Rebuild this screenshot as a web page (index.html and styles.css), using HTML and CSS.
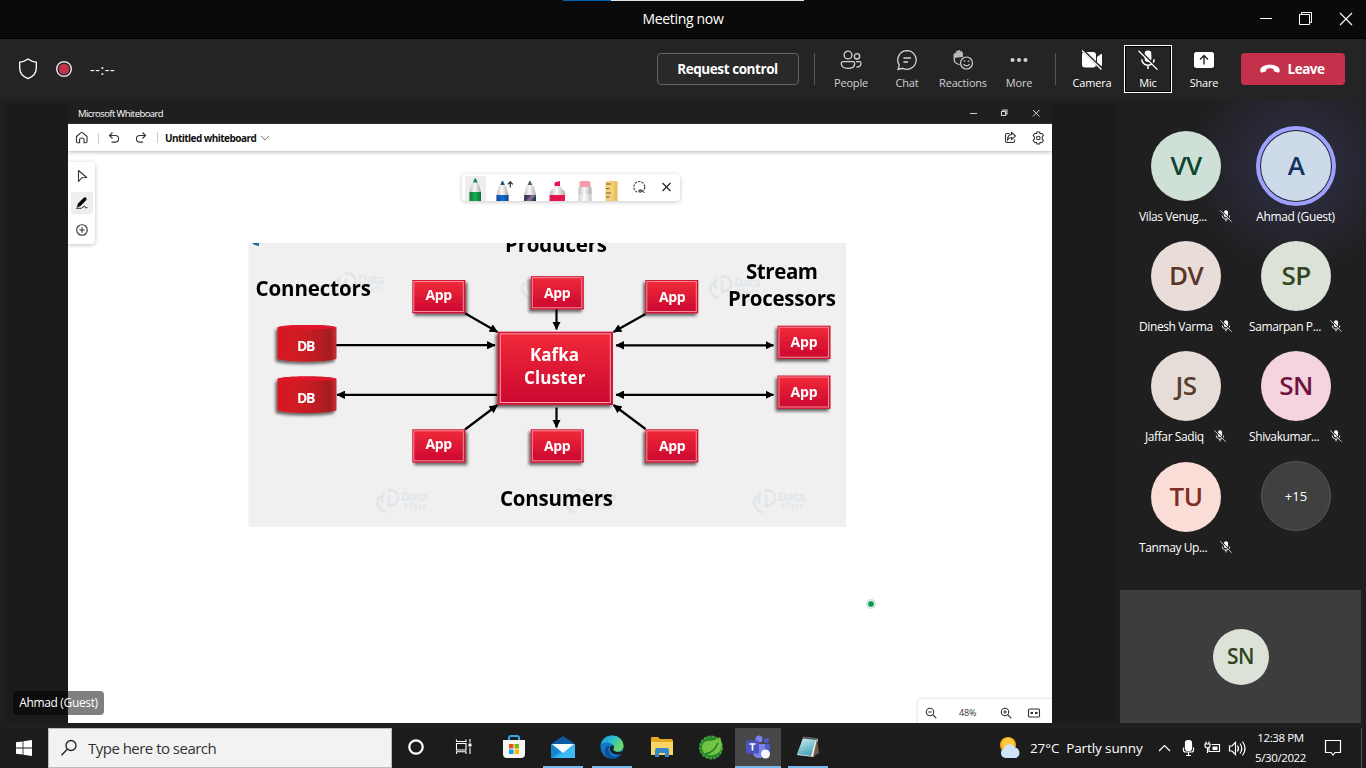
FILE: index.html
```html
<!DOCTYPE html>
<html lang="en">
<head>
<meta charset="utf-8">
<title>Meeting now</title>
<link rel="stylesheet" href="styles.css">
</head>
<body>
<svg width="0" height="0" class="defs">
  <defs>
    <symbol id="mic-off" viewBox="0 0 20 20">
      <rect x="6.6" y="0.5" width="6.8" height="11.5" rx="3.4" fill="currentColor"/>
      <path d="M3.8 9.2c0 3.5 2.7 6 6.2 6s6.2-2.5 6.2-6M10 15.2V19" fill="none" stroke="currentColor" stroke-width="1.5"/>
      <path d="M1.4 0.2L20.4 19" stroke="#222" stroke-width="1.8"/>
      <path d="M0.5 0.8L19.5 19.6" stroke="currentColor" stroke-width="1.3"/>
    </symbol>
  </defs>
</svg>
<div class="window">
  <header class="titlebar">
    <div class="strip"></div>
    <div class="title">Meeting now</div>
    <div class="controls">
      <svg width="100" height="20" viewBox="0 0 100 20" fill="none" stroke="#fff">
        <path d="M10 9.500h12"/>
        <path d="M49.500 5.500h10v10h-10z"/><path d="M51.500 5.500V3.500H61.500V13.500H59.500"/>
        <path d="M90 4l12 12M102 4L90 16" stroke-width="1.100"/>
      </svg>
    </div>
  </header>

  <div class="toolbar">
    <div class="status">
      <svg width="20" height="22" viewBox="0 0 20 22" fill="none" stroke="#fff" stroke-width="1.300"><path d="M10 1.100C12.500 3 15 3.900 18.300 4.100V10C18.300 15 15.500 18.500 10 20.700C4.500 18.500 1.700 15 1.700 10V4.100C5 3.900 7.500 3 10 1.100z"/></svg>
      <svg width="18" height="18" viewBox="0 0 18 18"><circle cx="9" cy="9" r="7.300" fill="none" stroke="#e0dede" stroke-width="1.500"/><circle cx="9" cy="9" r="5.300" fill="#c4314b"/></svg>
      <span class="timer">--:--</span>
    </div>
    <div class="actions">
      <button class="request">Request control</button>
      <i class="sep"></i>
      <div class="act dim"><svg width="22" height="22" viewBox="0 0 22 22" fill="none" stroke="currentColor" stroke-width="1.300"><circle cx="8" cy="6" r="3.900"/><circle cx="17" cy="7.300" r="2.700"/><path d="M3 12.700h10a1.700 1.700 0 0 1 1.700 1.700c0 3-2.500 4.900-6.700 4.900s-6.700-1.900-6.700-4.900A1.700 1.700 0 0 1 3 12.700zM16 12.700h3.500a1.500 1.500 0 0 1 1.500 1.500c0 2.700-2 3.900-4.700 3.900"/></svg><span>People</span></div>
      <div class="act dim"><svg width="22" height="22" viewBox="0 0 22 22" fill="none" stroke="currentColor" stroke-width="1.300"><path d="M11 1.700a9.300 9.300 0 1 1-4.300 17.600L2 20.500l1.300-4.400A9.300 9.300 0 0 1 11 1.700zM7.500 9h7.500M7.500 13h4.500"/></svg><span>Chat</span></div>
      <div class="act dim"><svg width="22" height="22" viewBox="0 0 22 22" fill="none" stroke="currentColor" stroke-width="1.200"><path d="M2.500 9V4.500q0-1.100.9-1.100t.9 1.100V2.800q0-1.200 1-1.200t1 1.200V2.200Q6.300 1 7.300 1t1 1.200v1q0-1.100.9-1.100t.9 1.100V8z" fill="#b8b8b8" stroke="none"/><path d="M2.200 5V10.500c0 3.200 3 4.800 5.500 5M10.200 3.500V8"/><circle cx="14.500" cy="14" r="6" fill="#242424"/><path d="M11.500 15.200q3 3.500 6 0"/><path d="M12.500 11.500v1.300M16.500 11.500v1.300" stroke-width="1.500"/></svg><span>Reactions</span></div>
      <div class="act dim"><svg width="22" height="22" viewBox="0 0 22 22" fill="currentColor"><circle cx="4.500" cy="11" r="2"/><circle cx="11" cy="11" r="2"/><circle cx="17.500" cy="11" r="2"/></svg><span>More</span></div>
      <i class="sep second"></i>
      <div class="act"><svg width="22" height="22" viewBox="0 0 22 22"><rect x="1" y="3" width="14" height="15.500" rx="3" fill="#fff"/><path d="M16 8l4-3q1-.5 1 .5v11q0 1-1 .5l-4-3z" fill="#fff"/><path d="M1.500 1L21 20" stroke="#242424" stroke-width="2.600"/><path d="M1 1.500L20.500 20.500" stroke="#fff" stroke-width="1.300"/></svg><span>Camera</span></div>
      <div class="act focused"><svg width="22" height="22"><use href="#mic-off" x="1" y="1" width="20" height="20"/></svg><span>Mic</span></div>
      <div class="act"><svg width="22" height="22" viewBox="0 0 22 22"><rect x="1" y="3" width="20" height="16" rx="2.500" fill="#fff"/><path d="M11 15.500V7M7 10.500l4-4 4 4" fill="none" stroke="#222" stroke-width="1.400"/></svg><span>Share</span></div>
      <button class="leave"><svg width="20" height="10" viewBox="0 0 20 10"><path d="M10 .8c4.500 0 9.500 1.700 9.700 5.200.1 1.800-.5 2.800-1.700 2.500l-3-.7c-1.500-.4-1.200-1.500-1.700-3-1.800-.8-4.800-.8-6.600 0-.5 1.500-.2 2.600-1.700 3l-3 .7C.8 8.800.2 7.800.3 6 .5 2.500 5.500.8 10 .8z" fill="#fff"/></svg>Leave</button>
    </div>
  </div>

  <main class="stage">
    <section class="shared">
      <div class="wb-title"><span>Microsoft Whiteboard</span>
        <svg width="76" height="12" viewBox="0 0 76 12" fill="none" stroke="#d4d4d4"><path d="M2 6.500h7"/><path d="M33.500 4.500h4v4h-4zM35 4.500V3h4v4h-1.500" stroke-width="1.100"/><path d="M65 3l6.500 6.500M71.500 3L65 9.500"/></svg>
      </div>
      <div class="wb-bar">
        <svg width="78" height="20" viewBox="0 0 78 20" fill="none" stroke="#333" stroke-width="1.100"><path d="M2.500 8.500L7 4.600q.8-.6 1.500 0l4.500 3.900v5.300q0 .9-.9.900H10v-3.500q0-1.200-2.200-1.200t-2.200 1.200v3.500H3.400q-.9 0-.9-.9z" /><path d="M24.500 5v11" stroke="#ccc"/><path d="M36 7.500h5.300a3.300 3.300 0 0 1 0 6.600H37.500M38.500 4.500l-3 3 3 3"/><path d="M71.500 7.500h-5.800a3.300 3.300 0 0 0 0 6.600H69M68.500 4.500l3 3-3 3"/></svg>
        <i></i><b>Untitled whiteboard</b>
        <svg width="10" height="6" viewBox="0 0 10 6" fill="none" stroke="#777"><path d="M1 1l4 4 4-4"/></svg>
        <svg class="wb-right" width="42" height="16" viewBox="0 0 42 16" fill="none" stroke="#333" stroke-width="1.100"><path d="M6.500 3.500H4Q2.500 3.500 2.500 5v6Q2.500 12.500 4 12.500h6q1.500 0 1.500-1.500V9.500M8.500 2.500l4 3.500-4 3.500V7.500Q6 7.500 4.500 10 4.500 5 8.500 4.500z"/><circle cx="35.300" cy="8" r="1.800"/><path d="M34 2h2.600l.5 1.700 1.700-.4 1.600 2.200L39.200 7v2l1.200 1.500-1.600 2.200-1.700-.4-.5 1.700H34l-.5-1.700-1.700.4-1.600-2.200L31.400 9V7l-1.200-1.500 1.600-2.200 1.700.4z"/></svg>
      </div>
      <div class="canvas">
        <div class="side-tools">
          <div><svg width="16" height="16" viewBox="0 0 16 16" fill="none" stroke="#333" stroke-width="1.100"><path d="M4.500 2.500v11L8 9.700l4.700-.2z" stroke-linejoin="round"/></svg></div>
          <div class="on"><svg width="16" height="16" viewBox="0 0 16 16"><path d="M9.700 2.700q1.700-1 2.600.2.900 1.400-.4 2.600L6.500 11l-3.800 1.700L4 8.500z" fill="#000"/><path d="M2 13.300h5.500l2.500-2q1.500-.5 1 1 .5 1.300 2.500.2" fill="none" stroke="#333"/></svg></div>
          <div><svg width="16" height="16" viewBox="0 0 16 16" fill="none" stroke="#333" stroke-width="1.100"><circle cx="8" cy="8" r="5.300"/><path d="M8 5.300v5.400M5.300 8h5.400"/></svg></div>
        </div>

        <div class="pens">
          <svg width="218" height="27" viewBox="462 174 218 27">
            <defs>
              <linearGradient id="body"><stop offset="0" stop-color="#bdbdbd"/><stop offset=".45" stop-color="#fafafa"/><stop offset="1" stop-color="#aaa"/></linearGradient>
              <linearGradient id="green"><stop offset="0" stop-color="#087a36"/><stop offset=".5" stop-color="#19ac57"/><stop offset="1" stop-color="#08733a"/></linearGradient>
              <linearGradient id="blue"><stop offset="0" stop-color="#0b4ba4"/><stop offset=".5" stop-color="#166fd5"/><stop offset="1" stop-color="#0b4494"/></linearGradient>
              <linearGradient id="galaxy" x2="1" y2=".4"><stop offset="0" stop-color="#285f78"/><stop offset=".35" stop-color="#39324d"/><stop offset=".65" stop-color="#92759c"/><stop offset="1" stop-color="#243c58"/></linearGradient>
            </defs>
            <rect x="465" y="176" width="21" height="25" fill="#eee"/>
            <path d="M469.500 201V192Q471 185 473.500 180h3.400Q479.500 185 481 192v9z" fill="url(#body)"/><path d="M469.500 192h11.500v9h-11.500z" fill="url(#green)"/><path d="M473 182.500l1.500-4h1.500l1.500 4z" fill="#16874a"/>
            <path d="M496.500 201v-6q1.500-7 4-12.500h3.800q3 5.500 4.200 12.500v6z" fill="url(#body)"/><path d="M496.500 195h12v6h-12z" fill="url(#blue)"/><path d="M500.300 185l1.500-4h1.300l1.500 4z" fill="#24547f"/>
            <path d="M510.300 187.500V182m-2.500 2.300l2.500-2.500 2.500 2.500" fill="none" stroke="#222" stroke-width="1.100"/>
            <path d="M524 201v-6q1.500-7 4-12.500h3.800q3 5.500 4.200 12.500v6z" fill="url(#body)"/><path d="M524 195h12v6h-12z" fill="url(#galaxy)"/><path d="M527.800 185l1.500-4h1.200l1.500 4z" fill="#40606a"/>
            <path d="M549.500 195q0-4.500 4-6.500l1-2.500h6l1 2.500q4 2 4 6.500z" fill="url(#body)"/><path d="M554.500 186v-3.500l5.500-1.500v5zM549.500 195h15.500v6h-15.500z" fill="#e3164f"/>
            <path d="M578.500 201v-14h13v14z" fill="url(#body)"/><path d="M578.500 194h13v7h-13z" fill="#fff" opacity=".35"/><path d="M579.500 187v-4q0-2 2-2h7q2 0 2 2v4z" fill="#f79baa"/>
            <path d="M605.500 181.500q6-1.500 12 0V201h-12z" fill="#f2d078"/><path d="M614 181v20h3.500v-19.500z" fill="#e8c167"/><path d="M606 184h5M606 188.500h3.500M606 193h5M606 197h3.500" stroke="#725f2c" fill="none"/>
            <circle cx="639.300" cy="187" r="5.500" fill="none" stroke="#333" stroke-width="1.100" stroke-dasharray="2.300 1.150"/><path d="M637.500 189h7v4.500h-7z" fill="#fff"/><circle cx="640" cy="191" r="1.200" fill="none" stroke="#222"/><path d="M641 192.500l3-3M641 189.500l3.500 3.500" stroke="#222"/>
            <path d="M662.500 183l8 8M670.500 183l-8 8" stroke="#222" stroke-width="1.200"/>
          </svg>
        </div>

        <svg class="diagram" width="598" height="284" viewBox="248 243 598 284">
          <defs>
            <linearGradient id="red" x2="0" y2="1"><stop offset="0" stop-color="#f02a38"/><stop offset="1" stop-color="#cb0831"/></linearGradient>
            <linearGradient id="dbred"><stop offset="0" stop-color="#d91923"/><stop offset=".5" stop-color="#c91b22"/><stop offset=".9" stop-color="#a51d1f"/><stop offset="1" stop-color="#d0303a"/></linearGradient>
            <filter id="sh" x="-20%" y="-20%" width="140%" height="150%"><feDropShadow dx="-2" dy="2.500" stdDeviation="1.500" flood-opacity=".6"/></filter>
            <filter id="shr" x="-20%" y="-20%" width="140%" height="150%"><feDropShadow dx="2" dy="2.500" stdDeviation="1.500" flood-opacity=".6"/></filter>
            <marker id="ar" viewBox="0 0 8 8" refX="7.500" refY="4" markerWidth="8.500" markerHeight="8.500" markerUnits="userSpaceOnUse" orient="auto-start-reverse"><path d="M0 0L8 4 0 8z"/></marker>
            <g id="box"><rect width="53" height="33.300" fill="#cf1235"/><rect x="1.500" y="1.500" width="49.500" height="30" fill="url(#red)" stroke="#f58d98" stroke-width="1"/></g>
            <g id="db"><path d="M0 3.500C2 0 57 0 59 3.500V34.500C57 38.500 2 38.500 0 34.500z" fill="url(#dbred)"/><path d="M0 3.500C2 0 57 0 59 3.500C57 6 2 6 0 3.500z" fill="#e2152a"/></g>
            <g id="mark"><path d="M5 9Q-1 15 5 22q2 3 6 3M13 3Q24 3 23 12q-1 6-9 7V8M9 6Q5 10 8 16" fill="none" stroke="#e0e6ea" stroke-width="2.800"/><text x="26" y="13.500" font-size="12.500" textLength="27">Data</text><text x="29" y="21.500" font-size="8.500" textLength="22">Flair</text></g>
          </defs>
          <rect x="248.500" y="243" width="597.500" height="284" fill="#f0f0f0"/>
          <path d="M252 243h7v3q-4 0-7-3z" fill="#1c6d91"/>
          <g class="wm"><use href="#mark" x="332" y="270"/><use href="#mark" x="520" y="273"/><use href="#mark" x="708" y="273"/><use href="#mark" x="375" y="487"/><use href="#mark" x="564" y="487"/><use href="#mark" x="752" y="487"/></g>
          <g stroke="#000" stroke-width="2.200" fill="none">
            <path d="M336 345.200H495" marker-end="url(#ar)"/><path d="M497 394.800H337" marker-end="url(#ar)"/><path d="M465 313.300L497.500 332" marker-end="url(#ar)"/><path d="M556.500 309V329.500" marker-end="url(#ar)"/><path d="M645.500 314L613.500 332" marker-end="url(#ar)"/><path d="M465 429.500L497.500 405" marker-end="url(#ar)"/><path d="M556.500 407.500V427.500" marker-end="url(#ar)"/><path d="M645.500 429L613.500 405" marker-end="url(#ar)"/>
            <path d="M616 345.300H773.500" marker-start="url(#ar)" marker-end="url(#ar)"/><path d="M616 394.800H773.500" marker-start="url(#ar)" marker-end="url(#ar)"/>
          </g>
          <g filter="url(#shr)"><use href="#box" x="412.300" y="280"/><use href="#box" x="412.300" y="429.300"/></g>
          <g filter="url(#sh)"><use href="#box" x="530.800" y="276.200"/><use href="#box" x="645.300" y="280"/><use href="#box" x="777.500" y="325.700"/><use href="#box" x="777.500" y="375.500"/><use href="#box" x="530.800" y="429.300"/><use href="#box" x="645.300" y="429.300"/><use href="#db" x="277.500" y="324"/><use href="#db" x="277.500" y="375.500"/><rect x="497.700" y="331.700" width="115.300" height="73.300" fill="#cf1235"/></g>
          <rect x="500.300" y="333.800" width="110" height="68.700" fill="url(#red)" stroke="#f7a2ab"/>
          <g class="lbl w" font-size="14">
            <text x="425.500" y="300" textLength="26.500">App</text><text x="544" y="297.500" textLength="26.500">App</text><text x="659" y="301.500" textLength="26.500">App</text>
            <text x="790.500" y="347" textLength="27">App</text><text x="790.500" y="396.500" textLength="27">App</text>
            <text x="425.500" y="448.500" textLength="26.500">App</text><text x="544" y="450.500" textLength="26.500">App</text><text x="659" y="450.500" textLength="26.500">App</text>
            <text x="297" y="350.500" textLength="18.500">DB</text><text x="297" y="402.500" textLength="18.500">DB</text>
          </g>
          <g class="lbl w" font-size="17"><text x="530" y="361" textLength="49">Kafka</text><text x="524" y="384" textLength="61.500">Cluster</text></g>
          <g class="lbl" font-size="20.500"><text x="255.500" y="295.500" textLength="115.500">Connectors</text><text x="505" y="252" textLength="102">Producers</text><text x="746" y="279" textLength="72">Stream</text><text x="728" y="306" textLength="108">Processors</text><text x="500" y="506" textLength="113">Consumers</text></g>
        </svg>

        <div class="laser"></div>
        <div class="zoombar"><svg width="14" height="14" viewBox="0 0 14 14" fill="none" stroke="#333" stroke-width="1.100"><circle cx="6" cy="6" r="3.700"/><path d="M9 9l3.300 3.300M4.300 6h3.400"/></svg><span>48%</span><svg width="14" height="14" viewBox="0 0 14 14" fill="none" stroke="#333" stroke-width="1.100"><circle cx="6" cy="6" r="3.700"/><path d="M9 9l3.300 3.300M4.300 6h3.400M6 4.300v3.400"/></svg><svg width="14" height="14" viewBox="0 0 14 14" fill="none" stroke="#333" stroke-width="1.100"><rect x="1.500" y="3" width="11" height="8" rx="1"/><path d="M3.500 7h2.500M8 7h2.500" stroke-width="1.800"/></svg></div>
      </div>
    </section>
    <div class="presenter">Ahmad (Guest)</div>
    <aside class="people">
      <div class="grid">
        <div class="p"><div class="av vv">VV</div><div class="nm"><span>Vilas Venug...</span><svg><use href="#mic-off"/></svg></div></div>
        <div class="p"><div class="av a">A</div><div class="nm"><span class="guest">Ahmad (Guest)</span></div></div>
        <div class="p"><div class="av dv">DV</div><div class="nm"><span>Dinesh Varma</span><svg><use href="#mic-off"/></svg></div></div>
        <div class="p"><div class="av sp">SP</div><div class="nm"><span>Samarpan P...</span><svg><use href="#mic-off"/></svg></div></div>
        <div class="p"><div class="av js">JS</div><div class="nm"><span class="short">Jaffar Sadiq</span><svg><use href="#mic-off"/></svg></div></div>
        <div class="p"><div class="av sn">SN</div><div class="nm"><span>Shivakumar...</span><svg><use href="#mic-off"/></svg></div></div>
        <div class="p last"><div class="av tu">TU</div><div class="nm"><span>Tanmay Up...</span><svg><use href="#mic-off"/></svg></div></div>
        <div class="p"><div class="av more">+15</div></div>
      </div>
      <div class="self"><div class="av sp">SN</div></div>
    </aside>
  </main>

  <footer class="taskbar">
    <div class="start"><svg width="16" height="16" viewBox="0 0 16 16" fill="#fff"><path d="M0 2.300l6.600-.9v6.200H0zM7.400 1.300L16 0v7.600H7.400zM0 8.400h6.600v6.200L0 13.700zM7.400 8.400H16V16l-8.600-1.200z"/></svg></div>
    <div class="search"><svg width="18" height="18" viewBox="0 0 18 18" fill="none" stroke="#222" stroke-width="1.300"><circle cx="11" cy="6.500" r="5"/><path d="M7.300 10.200L1.500 16.300"/></svg><span>Type here to search</span></div>
    <div class="apps">
      <div><svg width="18" height="18" viewBox="0 0 18 18"><circle cx="9" cy="9" r="6.700" fill="none" stroke="#fff" stroke-width="2.200"/></svg></div>
      <div class="view"><svg width="18" height="18" viewBox="0 0 18 18" fill="none" stroke="#fff" stroke-width="1.100"><path d="M1.500 1.500v2h9.500v-2M1.500 5.500h9.500v6.500H1.500zM1.500 16v-2.200h9.500V16M15 1v3.500M15 9.500V16"/><path d="M13.500 5.500h3v3h-3z" fill="#fff" stroke="none"/></svg></div>
      <div class="wide"><svg width="24" height="26" viewBox="0 0 24 26"><path d="M7 7V4q0-2 2-2h6q2 0 2 2v3" fill="none" stroke="#31a8e3" stroke-width="2"/><path d="M1 6h22v14q0 4-4 4H5q-4 0-4-4z" fill="#f6f6f6"/><path d="M7 10h4.500v4.500H7z" fill="#e64f24"/><path d="M12.500 10H17v4.500h-4.500z" fill="#7fba00"/><path d="M7 15.500h4.500V20H7z" fill="#00a4ef"/><path d="M12.500 15.500H17V20h-4.500z" fill="#ffb900"/></svg></div>
      <div class="wide run"><svg width="24" height="24" viewBox="0 0 24 24"><path d="M0 9L12 1l12 8v4H0z" fill="#0c5a9f"/><path d="M0 9h24v14H0z" fill="#2ba5ea"/><path d="M24 9v14H5z" fill="#3cb9f2"/><path d="M0 9l10 7.500L0 23z" fill="#1683cf"/><path d="M1 9h22L12 18z" fill="#f5faff"/></svg></div>
      <div class="wide run"><svg width="24" height="24" viewBox="0 0 24 24"><defs><linearGradient id="eg" y2=".5"><stop offset="0" stop-color="#1b8fdc"/><stop offset=".5" stop-color="#28bdd0"/><stop offset="1" stop-color="#70db62"/></linearGradient></defs><circle cx="12" cy="12" r="11.500" fill="#1478ca"/><path d="M.5 11C1.500 4 6 .5 12 .5 19 .5 23.500 5.500 23.500 10.500c0 4-3 6-6.500 6s-4.500-1.800-3.500-3.500C15 10 11 7.500 7 7.500 3.500 7.500 1 9 .5 11z" fill="url(#eg)"/><path d="M9 12q-2 5 3 9 4 2.500 10-3-4 7-11 5.500Q3 21 5 14q1-3 5-4z" fill="#0a4e9b"/><path d="M10 12q1-2 3.500-1.500 1 1 0 3-1 2 3 3.500 4 .5 7.500-1.500v2.500q-5 2.500-10 1-5-2-4-7z" fill="#1c1c1c"/></svg></div>
      <div class="wide"><svg width="22" height="22" viewBox="0 0 22 22"><path d="M0 2q0-1 1-1h6l2 2h11q2 0 2 2v14H0z" fill="#e8a821"/><path d="M0 6h22v13H0z" fill="#fbd463"/><path d="M4 21v-7q0-2 2-2h10q2 0 2 2v7h-4v-4H8v4z" fill="#3287cd"/></svg></div>
      <div class="wide"><svg width="26" height="26" viewBox="0 0 26 26"><circle cx="13" cy="13.500" r="11" fill="#28882c" stroke="#3f9d37" stroke-width="2" stroke-dasharray="3 1"/><path d="M22 3q5 13-4 17-7 3-12-1Q1 10 9 7q9 0 13-4z" fill="#72c544"/><path d="M7 20q9-1 13-11" fill="none" stroke="#1f7a2a" stroke-width="1.500"/></svg></div>
      <div class="wide run teams"><svg width="26" height="26" viewBox="0 0 26 26"><circle cx="14" cy="5" r="3.500" fill="#7b83eb"/><circle cx="21.500" cy="6.500" r="2.500" fill="#5059c9"/><path d="M16 10h9v7q0 4-4 4h-5z" fill="#5059c9"/><path d="M8 10h12v8q0 6-6 6t-6-6z" fill="#7b83eb"/><rect x="1" y="6.500" width="13" height="13" rx="1" fill="#4b53bc"/><path d="M4.500 10h6M7.500 10v6.500" stroke="#fff" stroke-width="1.700"/><circle cx="20.500" cy="20" r="4.500" fill="#f6f6ff"/></svg></div>
      <div class="wide run"><svg width="24" height="24" viewBox="0 0 24 24"><defs><linearGradient id="np" x2=".4" y2="1"><stop offset="0" stop-color="#d6f0f3"/><stop offset="1" stop-color="#4ba7b9"/></linearGradient></defs><path d="M8 2l14 2-4 18-17-2z" fill="#e9eef0"/><path d="M7 3l13 1-5 17-14-2z" fill="url(#np)"/><path d="M7 1.500l14 1.500-.3 2L6.500 3.500z" fill="#565c60"/><path d="M21 4l2 14-6 4z" fill="#76573d"/></svg></div>
    </div>
    <div class="tray">
      <svg width="22" height="24" viewBox="0 0 22 24"><circle cx="9" cy="9" r="8" fill="#f6ad1b"/><circle cx="9" cy="8" r="6" fill="#ffca3b"/><path d="M6 22a5 5 0 0 1-1-9.500 6 6 0 0 1 11-1A5.500 5.500 0 0 1 17 22z" fill="#cfe4f7"/></svg>
      <span class="weather">27°C&nbsp; Partly sunny</span>
      <svg class="sys" width="96" height="20" viewBox="1156 738 96 20" fill="none" stroke="#fff" stroke-width="1.200"><path d="M1159 751l5.500-5.500 5.500 5.500"/><rect x="1185.500" y="740.500" width="6" height="10" rx="2.500" fill="#fff"/><path d="M1183.500 747.500v2.500q0 2 2 2h6q2 0 2-2v-2.500M1188.500 752v4M1186 755.500h5" /><path d="M1211.500 744.500h8v7h-10.500V748" /><path d="M1212.500 746.500h5v3.500h-5z" fill="#fff" stroke="none"/><path d="M1206 741.500v2.500M1209 741.500v2.500M1205 744h5v2q0 1.500-2.500 2-2.500-.5-2.500-2zM1207.500 748v5"/><path d="M1229.500 746h2.500l3.500-3.500v12l-3.500-3.500h-2.500zM1237.500 745.500q2 3 0 6M1240 743.500q3.500 5 0 10M1242.500 741.500q5 7 0 14"/></svg>
      <div class="clock"><span>12:38 PM</span><span>5/30/2022</span></div>
      <svg width="18" height="18" viewBox="0 0 18 18" fill="none" stroke="#fff" stroke-width="1.200"><path d="M1.500 1.500h15v12H11L9 16l-2-2.500H1.500z"/></svg>
      <i></i>
    </div>
  </footer>
</div>
</body>
</html>
```
FILE: styles.css
```css
* { box-sizing: border-box; }
body { margin: 0; background: #1c1c1c; font-family: "Open Sans", "Noto Sans", sans-serif; color: #fff; overflow: hidden; }
svg { display: block; flex: none; }
button { font: inherit; color: inherit; margin: 0; padding: 0; }
.defs { position: absolute; }
.window { width: 1366px; height: 768px; display: flex; flex-direction: column; }

.titlebar { height: 39px; flex: none; background: #0a0a0a; border-bottom: 1px solid #000; display: grid; grid-template-columns: 1fr auto 1fr; align-items: center; position: relative; }
.strip { position: absolute; left: 563px; top: 0; width: 241px; height: 1px; background: linear-gradient(90deg, #0063b1 48px, #e4e4e4 48px); }
.title { grid-column: 2; font-size: 14px; letter-spacing: -0.32px; padding-bottom: 1px; }
.controls { justify-self: end; padding-right: 16px; }
.controls svg { overflow: visible; }

.toolbar { height: 60px; flex: none; background: #242424; display: flex; justify-content: space-between; align-items: center; padding: 0 21px 0 18px; }
.status { display: flex; align-items: center; gap: 17px; }
.timer { font-size: 14px; letter-spacing: 0.7px; }
.actions { display: flex; align-items: center; }
.request { width: 142px; height: 32px; border: 1px solid #666; border-radius: 4px; background: #292929; font-weight: 700; font-size: 13.5px; letter-spacing: -0.43px; padding-right: 1px; }
.sep { width: 1px; height: 32px; background: #555; margin: 0 8px 0 15px; }
.sep.second { margin: 0 8px; }
.act { width: 56px; height: 48px; display: flex; flex-direction: column; align-items: center; justify-content: center; font-size: 11px; letter-spacing: -0.2px; padding-top: 3px; }
.act span { line-height: 16px; margin-top: 4px; margin-bottom: 1px; }
.act.dim { color: #d2d2d2; }
.act.focused { width: 48px; margin: 0 4px; border: 1px solid #fff; box-shadow: inset 0 0 0 1px #000; padding-top: 2px; }
.leave { width: 104px; height: 32px; margin-left: 9px; border: 0; border-radius: 4px; background: #c4314b; font-weight: 700; font-size: 13.5px; letter-spacing: -0.5px; display: flex; align-items: center; justify-content: center; gap: 8px; padding-right: 2px; }

.stage { height: 629px; flex: none; background: #1f1f1f; display: flex; position: relative; padding: 5px 0 5px 5px; }
.shared { width: 1111px; border-left: 63px solid #1b1b1b; border-right: 64px solid #1b1b1b; display: flex; flex-direction: column; }
.wb-title { height: 20px; background: #1f1f1f; display: flex; align-items: center; justify-content: space-between; padding: 0 8px 1px 10px; font-size: 9px; letter-spacing: -0.6px; border-bottom: 1px solid #333; }
.wb-title span { letter-spacing: -0.58px; font-size: 9.5px; }
.wb-bar { height: 27px; background: #fff; color: #111; display: flex; align-items: center; padding: 0 7px 0 6px; font-size: 10px; box-shadow: 0 1px 4px rgba(0,0,0,.3); position: relative; z-index: 1; }
.wb-bar i { width: 1px; height: 11px; background: #ccc; margin: 0 7px 0 5px; }
.wb-bar b { letter-spacing: -0.55px; margin-right: 4px; }
.wb-right { margin-left: auto; }
.canvas { flex: 1; background: #fff; position: relative; overflow: hidden; color: #333; }
.side-tools { position: absolute; left: 0; top: 11px; width: 27px; height: 82px; border-radius: 0 4px 4px 0; background: #fff; box-shadow: 0 1px 4px rgba(0,0,0,.25); display: flex; flex-direction: column; gap: 5px; padding-top: 3px; align-items: center; }
.side-tools div { width: 22px; height: 22px; border-radius: 2px; display: grid; place-items: center; }
.side-tools .on { background: #eee; }
.pens { position: absolute; left: 394px; top: 23px; width: 218px; height: 27px; border-radius: 4px; background: #fff; box-shadow: 0 1px 4px rgba(0,0,0,.22); }
.diagram { position: absolute; left: 180px; top: 92px; }
.lbl { font-family: "Open Sans", sans-serif; font-weight: 700; fill: #000; }
.lbl.w { fill: #fff; }
#mark text { font-weight: 700; fill: #e2e7eb; }
.laser { position: absolute; left: 799px; top: 449px; width: 8px; height: 8px; border-radius: 50%; background: #0b9a50; border: 1px solid #fff; box-shadow: 0 0 0 1px #d5ddd8; }
.zoombar { position: absolute; right: 0; bottom: 0; width: 134px; height: 24px; padding: 3px 11px 0 6px; background: #fff; box-shadow: 0 0 3px rgba(0,0,0,.22); border-radius: 4px 0 0 0; display: flex; align-items: center; font-size: 9px; letter-spacing: -0.2px; }
.zoombar span { margin: 0 21px 0 21px; width: 19px; }
.zoombar svg:last-child { margin-left: auto; }
.presenter { position: absolute; left: 13px; top: 592px; width: 91px; height: 24px; border-radius: 4px; background: rgba(0,0,0,.5); font-size: 12px; line-height: 24px; text-align: center; letter-spacing: -0.35px; white-space: nowrap; }

.people { width: 250px; margin-top: -5px; height: 624px; padding: 0 5px 0 4px; display: flex; flex-direction: column; justify-content: space-between; background: radial-gradient(circle at 180px 67px, #2b2a3b 35px, #1f1f1f 110px); }
.grid { display: grid; grid-template-columns: 110px 110px; grid-auto-rows: 110px; padding: 32px 0 0 11px; }
.p { display: flex; flex-direction: column; align-items: center; }
.p.last { padding-top: 1px; }
.av { width: 70px; height: 70px; flex: none; border-radius: 50%; display: grid; place-items: center; font-size: 26px; font-weight: 600; letter-spacing: -0.6px; font-kerning: none; padding-bottom: 2px; }
.vv { background: #cfe1d7; color: #0e4330; }
.a { background: #cddaea; color: #14325c; box-shadow: 0 0 0 1px #202030, 0 0 0 5px #9ea2ff; }
.dv { background: #e8ddd9; color: #5a3527; }
.sp { background: #dce2d7; color: #30451f; }
.js { background: #e6dcd8; color: #573d2d; }
.sn { background: #f5d3e0; color: #6f153c; }
.tu { background: #fbddd7; color: #7e2d26; }
.more { background: #404040; border: 1px solid #5a5a5a; font-size: 13px; letter-spacing: 0; font-weight: 400; padding: 0; }
.nm { display: flex; align-items: center; margin-top: 6px; height: 18px; font-size: 12px; letter-spacing: -0.4px; white-space: nowrap; padding-right: 1px; }
.nm span { width: 73px; margin-right: 8px; }
.nm span.short { width: 61px; }
.nm span.guest { width: auto; margin: 0; letter-spacing: -0.35px; }
.nm svg { width: 12px; height: 12px; }
.self { height: 133px; background: #3d3d3d; display: grid; place-items: center; }
.self .av { width: 56px; height: 56px; font-size: 21px; }

.taskbar { height: 40px; flex: none; background: #1c1c1c; display: flex; }
.start { width: 48px; display: grid; place-items: center; }
.search { width: 344px; background: #f2f2f2; border: 1px solid #bbb; color: #333; display: flex; align-items: center; gap: 10px; padding-left: 11px; font-size: 15px; letter-spacing: -0.52px; }
.apps { display: flex; }
.apps div { width: 48px; height: 40px; display: grid; place-items: center; border-bottom: 2px solid transparent; }
.apps .view { margin-right: 1.5px; }
.apps .wide { width: 40px; margin: 0 4.6px; }
.apps div.run { border-bottom-color: #76b9ed; }
.apps div.teams { width: 46px; margin: 0 2px 0 0; background: #474747; }
.tray { margin-left: auto; display: flex; align-items: center; }
.weather { font-size: 13.5px; letter-spacing: -0.1px; margin-left: 9px; width: 126px; white-space: nowrap; }
.clock { display: flex; flex-direction: column; align-items: center; justify-content: space-between; width: 60px; height: 38px; font-size: 11.5px; line-height: 18px; letter-spacing: -0.4px; padding-right: 3px; }
.tray .clock + svg { margin: 0 19px 0 12px; }
.tray i { width: 1px; height: 40px; background: #555; margin-right: 4px; }
```
